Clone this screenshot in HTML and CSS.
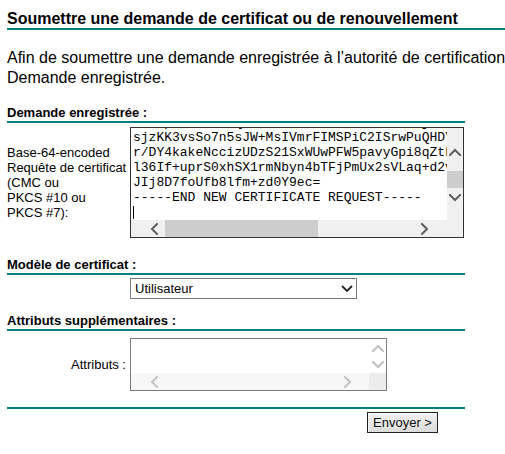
FILE: index.html
```html
<!DOCTYPE html>
<html lang="fr">
<head>
<meta charset="utf-8">
<title>Soumettre une demande de certificat</title>
<link rel="stylesheet" href="styles.css">
</head>
<body>
<div class="page">
  <h1 class="title">Soumettre une demande de certificat ou de renouvellement</h1>
  <p class="intro">Afin de soumettre une demande enregistrée à l’autorité de certification, collez une demande de certificat CMC ou PKCS #10 codée en base 64 dans la zone<br>Demande enregistrée.</p>

  <form class="form">
    <h2 class="section-head section-first">Demande enregistrée :</h2>
    <div class="row row-request">
      <div class="label label-left">Base-64-encoded<br>Requête de certificat<br>(CMC ou<br>PKCS #10 ou<br>PKCS #7):</div>
      <div class="textbox textbox-request">
        <div class="tb-content">
          <div class="tb-text">
            <div class="tb-line">MIIEpDCCA4wCAQAwXzELMAkGA1UEBhMCRlIxDjAMBgNVBAgTBVBhcmlz</div>
            <div class="tb-line">sjzKK3vsSo7n5sJW+MsIVmrFIMSPiC2ISrwPuQHDYkq8</div>
            <div class="tb-line">r/DY4kakeNccizUDzS21SxWUwPFW5pavyGpi8qZtLm0w</div>
            <div class="tb-line">l36If+uprS0xhSX1rmNbyn4bTFjPmUx2sVLaq+d2vQ7e</div>
            <div class="tb-line">JIj8D7foUfb8lfm+zd0Y9ec=</div>
            <div class="tb-line">-----END NEW CERTIFICATE REQUEST-----</div>
            <div class="tb-line"><span class="caret"></span></div>
          </div>
        </div>
        <div class="vbar vbar-active">
          <span class="sb-btn sb-up"><svg width="12" height="8" viewBox="0 0 12 8"><polyline points="1,7 6,2 11,7" /></svg></span>
          <span class="vthumb"></span>
          <span class="sb-btn sb-down"><svg width="12" height="8" viewBox="0 0 12 8"><polyline points="1,1 6,6 11,1" /></svg></span>
        </div>
        <div class="hbar hbar-active">
          <span class="sb-btn sb-left"><svg width="8" height="12" viewBox="0 0 8 12"><polyline points="7,1 2,6 7,11" /></svg></span>
          <span class="hthumb"></span>
          <span class="sb-btn sb-right"><svg width="8" height="12" viewBox="0 0 8 12"><polyline points="1,1 6,6 1,11" /></svg></span>
        </div>
        <div class="corner"></div>
      </div>
    </div>

    <h2 class="section-head section-template">Modèle de certificat :</h2>
    <div class="row row-select">
      <div class="label"></div>
      <div class="select">
        <span class="select-text">Utilisateur</span>
        <svg class="select-arrow" width="12" height="8" viewBox="0 0 12 8"><polyline points="1,1 6,6 11,1" /></svg>
      </div>
    </div>

    <h2 class="section-head section-attrs">Attributs supplémentaires :</h2>
    <div class="row row-attrs">
      <div class="label label-right">Attributs :</div>
      <div class="textbox textbox-attrs">
        <div class="tb-content"></div>
        <div class="vbar vbar-disabled">
          <span class="sb-btn"><svg width="12" height="8" viewBox="0 0 12 8"><polyline points="1,7 6,2 11,7" /></svg></span>
          <span class="sb-btn"><svg width="12" height="8" viewBox="0 0 12 8"><polyline points="1,1 6,6 11,1" /></svg></span>
        </div>
        <div class="hbar hbar-disabled">
          <span class="sb-btn sb-left"><svg width="8" height="12" viewBox="0 0 8 12"><polyline points="7,1 2,6 7,11" /></svg></span>
          <span class="sb-btn sb-right-end"><svg width="8" height="12" viewBox="0 0 8 12"><polyline points="1,1 6,6 1,11" /></svg></span>
        </div>
        <div class="corner corner-disabled"></div>
      </div>
    </div>

    <hr class="rule">
    <div class="actions">
      <button type="button" class="submit">Envoyer &gt;</button>
    </div>
  </form>
</div>
</body>
</html>
```

FILE: styles.css
```css
html, body {
  margin: 0;
  padding: 0;
  overflow: hidden;
  background: #ffffff;
}

body {
  font-family: "Liberation Sans", Arial, sans-serif;
  color: #000000;
}

.page {
  width: 900px;
  padding-left: 7px;
}

.title {
  margin: 10px 0 0 0;
  font-size: 16px;
  line-height: 18px;
  font-weight: bold;
  border-bottom: 2px solid #008080;
  white-space: nowrap;
}

.intro {
  margin: 18px 0 0 0;
  font-size: 16px;
  line-height: 20px;
  white-space: nowrap;
}

.form {
  width: 458px;
  margin: 0;
}

.section-head {
  margin: 0;
  font-size: 13px;
  line-height: 16px;
  font-weight: bold;
  border-bottom: 2px solid #008080;
}

.section-first { margin-top: 17px; }
.section-template { margin-top: 19px; }
.section-attrs { margin-top: 14px; }

.row {
  display: grid;
  grid-template-columns: 119px 1fr;
  column-gap: 4px;
  align-items: center;
  font-size: 13px;
  line-height: 15px;
}

.row-request { margin-top: 4px; }
.row-select { margin-top: 3px; }
.row-attrs { margin-top: 7px; }

.label {
  white-space: nowrap;
}

.label-right {
  text-align: right;
}

/* fake textarea */
.textbox {
  display: grid;
  border: 1px solid #7a7a7a;
  background: #ffffff;
  box-sizing: border-box;
}

.textbox-request {
  width: 334px;
  height: 111px;
  grid-template-columns: 1fr 16px;
  grid-template-rows: 1fr 17px;
  border-color: #333333;
}

.textbox-attrs {
  width: 257px;
  height: 53px;
  grid-template-columns: 1fr 17px;
  grid-template-rows: 1fr 17px;
}

.tb-content {
  overflow: hidden;
  padding-left: 2px;
}

.tb-text {
  margin-top: -13px;
  font-family: "Liberation Mono", "Courier New", monospace;
  font-size: 13px;
  line-height: 15px;
  color: #000000;
}

.tb-line {
  white-space: pre;
  height: 15px;
}

.caret {
  display: inline-block;
  width: 0;
  height: 13px;
  border-left: 1px solid #000000;
  vertical-align: top;
  margin-top: 1px;
}

.vbar {
  display: flex;
  flex-direction: column;
  align-items: center;
}

.vbar-active {
  background: #f0f0f0;
}

.vbar-disabled {
  background: #ffffff;
}

.hbar {
  display: flex;
  align-items: center;
  padding-left: 14px;
}

.hbar-active {
  background: #f0f0f0;
}

.hbar-disabled {
  background: #f7f7f7;
}

.corner {
  background: #f0f0f0;
}

.corner-disabled {
  background: #ececec;
}

.sb-btn {
  display: flex;
  align-items: center;
  justify-content: center;
  width: 17px;
  height: 17px;
  flex: none;
}

.sb-btn svg polyline {
  fill: none;
  stroke-width: 2;
  stroke-linecap: square;
  stroke-linejoin: miter;
}

.vbar-active .sb-btn svg polyline,
.hbar-active .sb-btn svg polyline {
  stroke: #5f5f5f;
}

.vbar-disabled .sb-btn svg polyline,
.hbar-disabled .sb-btn svg polyline {
  stroke: #c2c2c2;
}

.sb-up { margin-top: 15px; }
.sb-down { margin-top: 1px; }

.vthumb {
  width: 16px;
  height: 17px;
  margin-top: 11px;
  background: #cdcdcd;
  flex: none;
}

.hthumb {
  width: 153px;
  height: 17px;
  margin-left: 3px;
  background: #cdcdcd;
  flex: none;
}

.sb-right { margin-left: 98px; }
.sb-right-end { margin-left: 177px; }

/* fake select */
.select {
  width: 227px;
  height: 21px;
  box-sizing: border-box;
  border: 1px solid #7a7a7a;
  background: #ffffff;
  display: flex;
  align-items: center;
  justify-content: space-between;
  padding: 0 3px 0 4px;
}

.select-text {
  font-size: 13px;
  line-height: 15px;
}

.select-arrow polyline {
  fill: none;
  stroke: #222222;
  stroke-width: 1.8;
}

.rule {
  margin: 16px 0 0 0;
  height: 0;
  border: 0;
  border-top: 2px solid #008080;
}

.actions {
  display: flex;
  justify-content: flex-end;
  padding-right: 27px;
  margin-top: 3px;
}

.submit {
  width: 71px;
  height: 21px;
  box-sizing: border-box;
  margin: 0;
  padding: 0;
  border: 1px solid #222222;
  background: linear-gradient(#f0f0f0, #dcdcdc);
  box-shadow: inset 1px 1px 0 #ffffff;
  font-family: "Liberation Sans", Arial, sans-serif;
  font-size: 13px;
  line-height: 15px;
  color: #111111;
}
```
